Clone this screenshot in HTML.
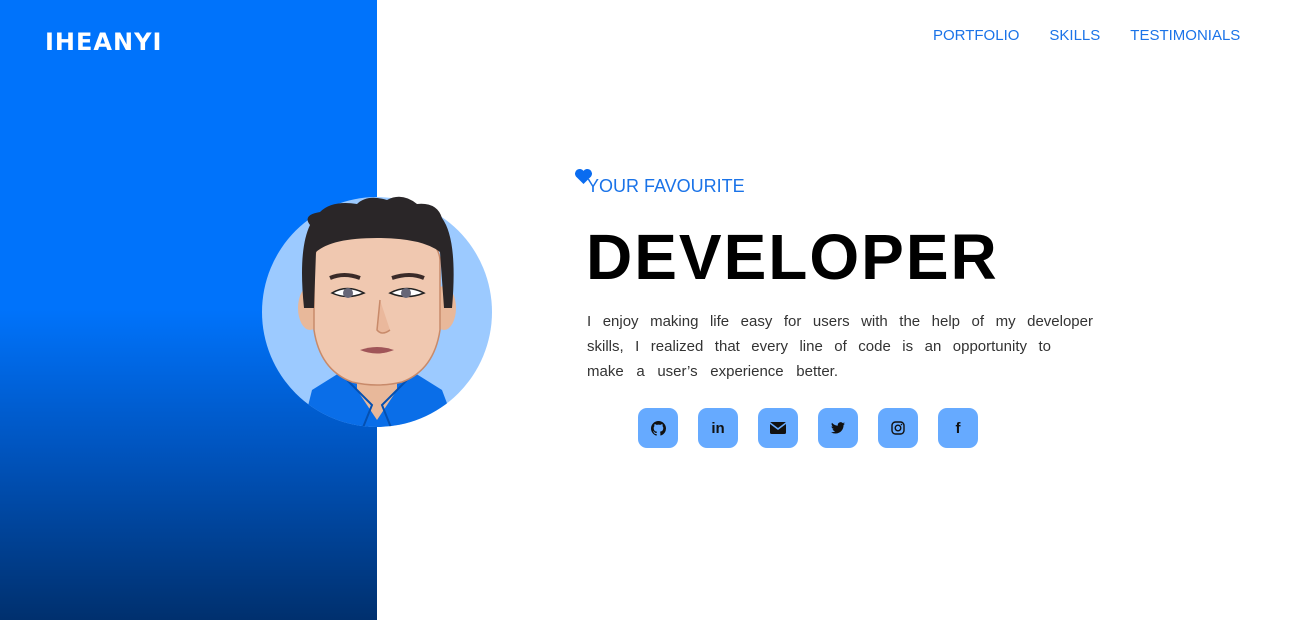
<!DOCTYPE html>
<html><head><style>
*{margin:0;padding:0;box-sizing:border-box}
body{width:1296px;height:620px;position:relative;overflow:hidden;background:#fff;font-family:"Liberation Sans",sans-serif}
.left{position:absolute;left:0;top:0;width:377px;height:620px;background:linear-gradient(#0073fb 0%,#0073fb 50%,#0055c0 72%,#00306e 100%)}
.logo{position:absolute;left:45px;top:28px;color:#fff;font-family:"Comic Sans MS","DejaVu Sans",sans-serif;font-weight:bold;font-size:24px;letter-spacing:1px}
nav{position:absolute;top:27px;left:933px;font-size:15px;color:#1a73e8;white-space:nowrap}
nav span{margin-right:30px}
.fav{position:absolute;left:587px;top:176px;font-size:18px;color:#1a73e8}
.heart{position:absolute;left:574px;top:168px}
h1{position:absolute;left:586px;top:220px;font-size:64px;font-weight:bold;letter-spacing:2px;color:#000}
.p{position:absolute;left:587px;top:309px;font-size:15px;line-height:25px;color:#333}
.p div{text-align:justify;text-align-last:justify;white-space:nowrap}
.icons{position:absolute;left:638px;top:408px}
.icons div{position:absolute;width:40px;height:40px;border-radius:9px;background:#66aaff;display:flex;align-items:center;justify-content:center;font-weight:bold;font-size:15px;color:#111}
</style></head><body>
<div class="left"></div>
<div class="logo">IHEANYI</div>
<nav><span>PORTFOLIO</span><span>SKILLS</span><span>TESTIMONIALS</span></nav>
<svg style="position:absolute;left:262px;top:190px" width="232" height="240" viewBox="0 0 232 240">
<defs><clipPath id="c"><circle cx="115" cy="122" r="115"/></clipPath></defs>
<circle cx="115" cy="122" r="115" fill="#9ccaff"/>
<g clip-path="url(#c)">
<path d="M40 240 L50 200 L90 175 L140 175 L180 200 L195 240Z" fill="#0a6ee8"/>
<path d="M95 170 L95 200 L115 230 L135 200 L135 170Z" fill="#e8b89a"/>
<path d="M80 185 L110 215 L100 240 M150 185 L120 215 L130 240" stroke="#0550b0" stroke-width="2" fill="none"/>
</g>
<ellipse cx="48" cy="118" rx="12" ry="22" fill="#e8b89a"/>
<ellipse cx="182" cy="118" rx="12" ry="22" fill="#e8b89a"/>
<path d="M52 70 Q54 40 115 38 Q176 40 178 70 L178 140 Q172 180 140 192 Q115 198 90 192 Q58 180 52 140Z" fill="#f0c8b0" stroke="#c88a6a" stroke-width="1.5"/>
<path d="M42 118 Q36 60 48 35 Q40 25 58 22 Q70 10 95 14 Q105 4 125 10 Q140 2 155 14 Q175 12 180 28 Q196 50 190 118 L182 118 L178 62 Q160 48 115 48 Q70 48 54 62 L52 118Z" fill="#2a2628"/>
<path d="M68 88 Q82 82 98 88 M130 88 Q148 82 162 88" stroke="#3a2a28" stroke-width="4" fill="none"/>
<path d="M70 103 Q85 94 102 103 Q85 110 70 103Z M128 103 Q145 94 162 103 Q145 110 128 103Z" fill="#fff" stroke="#222" stroke-width="1.5"/>
<circle cx="86" cy="103" r="5" fill="#667"/><circle cx="144" cy="103" r="5" fill="#667"/>
<path d="M118 110 L115 140 Q120 146 128 140" stroke="#c88a6a" stroke-width="1.5" fill="#eab89c"/>
<path d="M98 160 Q115 154 132 160 Q115 167 98 160Z" fill="#a05558"/>
</svg>
<svg class="heart" width="19" height="17" viewBox="0 0 20 18"><path d="M10 17 L2 9 A5 5 0 0 1 10 3 A5 5 0 0 1 18 9Z" fill="#0a6cf0"/></svg>
<div class="fav">YOUR FAVOURITE</div>
<h1>DEVELOPER</h1>
<div class="p">
<div style="width:506px">I enjoy making life easy for users with the help of my developer</div>
<div style="width:464px">skills, I realized that every line of code is an opportunity to</div>
<div style="width:251px">make a user’s experience better.</div>
</div>
<div class="icons">
<div style="left:0"><svg width="15" height="15" viewBox="0 0 16 16"><path fill="#111" d="M8 0C3.6 0 0 3.6 0 8c0 3.5 2.3 6.5 5.5 7.6.4.1.5-.2.5-.4v-1.4c-2.2.5-2.7-1-2.7-1-.4-.9-.9-1.2-.9-1.2-.7-.5.1-.5.1-.5.8.1 1.200.8 1.2.8.7 1.2 1.9.9 2.3.7.1-.5.3-.9.5-1.1-1.8-.2-3.6-.9-3.6-4 0-.9.3-1.6.8-2.1-.1-.2-.4-1 .1-2.1 0 0 .7-.2 2.2.8a7.5 7.5 0 014 0c1.5-1 2.2-.8 2.2-.8.4 1.1.2 1.9.1 2.1.5.6.8 1.3.8 2.1 0 3.1-1.9 3.700-3.6 3.9.3.3.5.8.5 1.5v2.2c0 .2.1.5.6.4A8 8 0 0016 8c0-4.4-3.6-8-8-8z"/></svg></div>
<div style="left:60px">in</div>
<div style="left:120px"><svg width="16" height="12" viewBox="0 0 16 12"><rect width="16" height="12" rx="1.5" fill="#111"/><path d="M0 1 L8 7 L16 1" stroke="#66aaff" stroke-width="1.5" fill="none"/></svg></div>
<div style="left:180px"><svg width="14" height="12" viewBox="0 0 24 20"><path fill="#111" d="M24 2.4a10 10 0 01-2.8.8A5 5 0 0023.3.4a10 10 0 01-3.1 1.2A4.9 4.9 0 0011.8 6 14 14 0 011.7.9a4.9 4.9 0 001.5 6.6A4.9 4.9 0 011 6.9a4.9 4.9 0 003.9 4.9 5 5 0 01-2.2.1 4.9 4.9 0 004.6 3.4A9.9 9.9 0 010 17.3 14 14 0 007.5 19.5c9.1 0 14-7.5 14-14v-.6A10 10 0 0024 2.4z"/></svg></div>
<div style="left:240px"><svg width="14" height="14" viewBox="0 0 14 14"><rect x="1" y="1" width="12" height="12" rx="3.5" stroke="#111" stroke-width="1.4" fill="none"/><circle cx="7" cy="7" r="2.8" stroke="#111" stroke-width="1.4" fill="none"/><circle cx="10.5" cy="3.5" r=".8" fill="#111"/></svg></div>
<div style="left:300px">f</div>
</div>
</body></html>
